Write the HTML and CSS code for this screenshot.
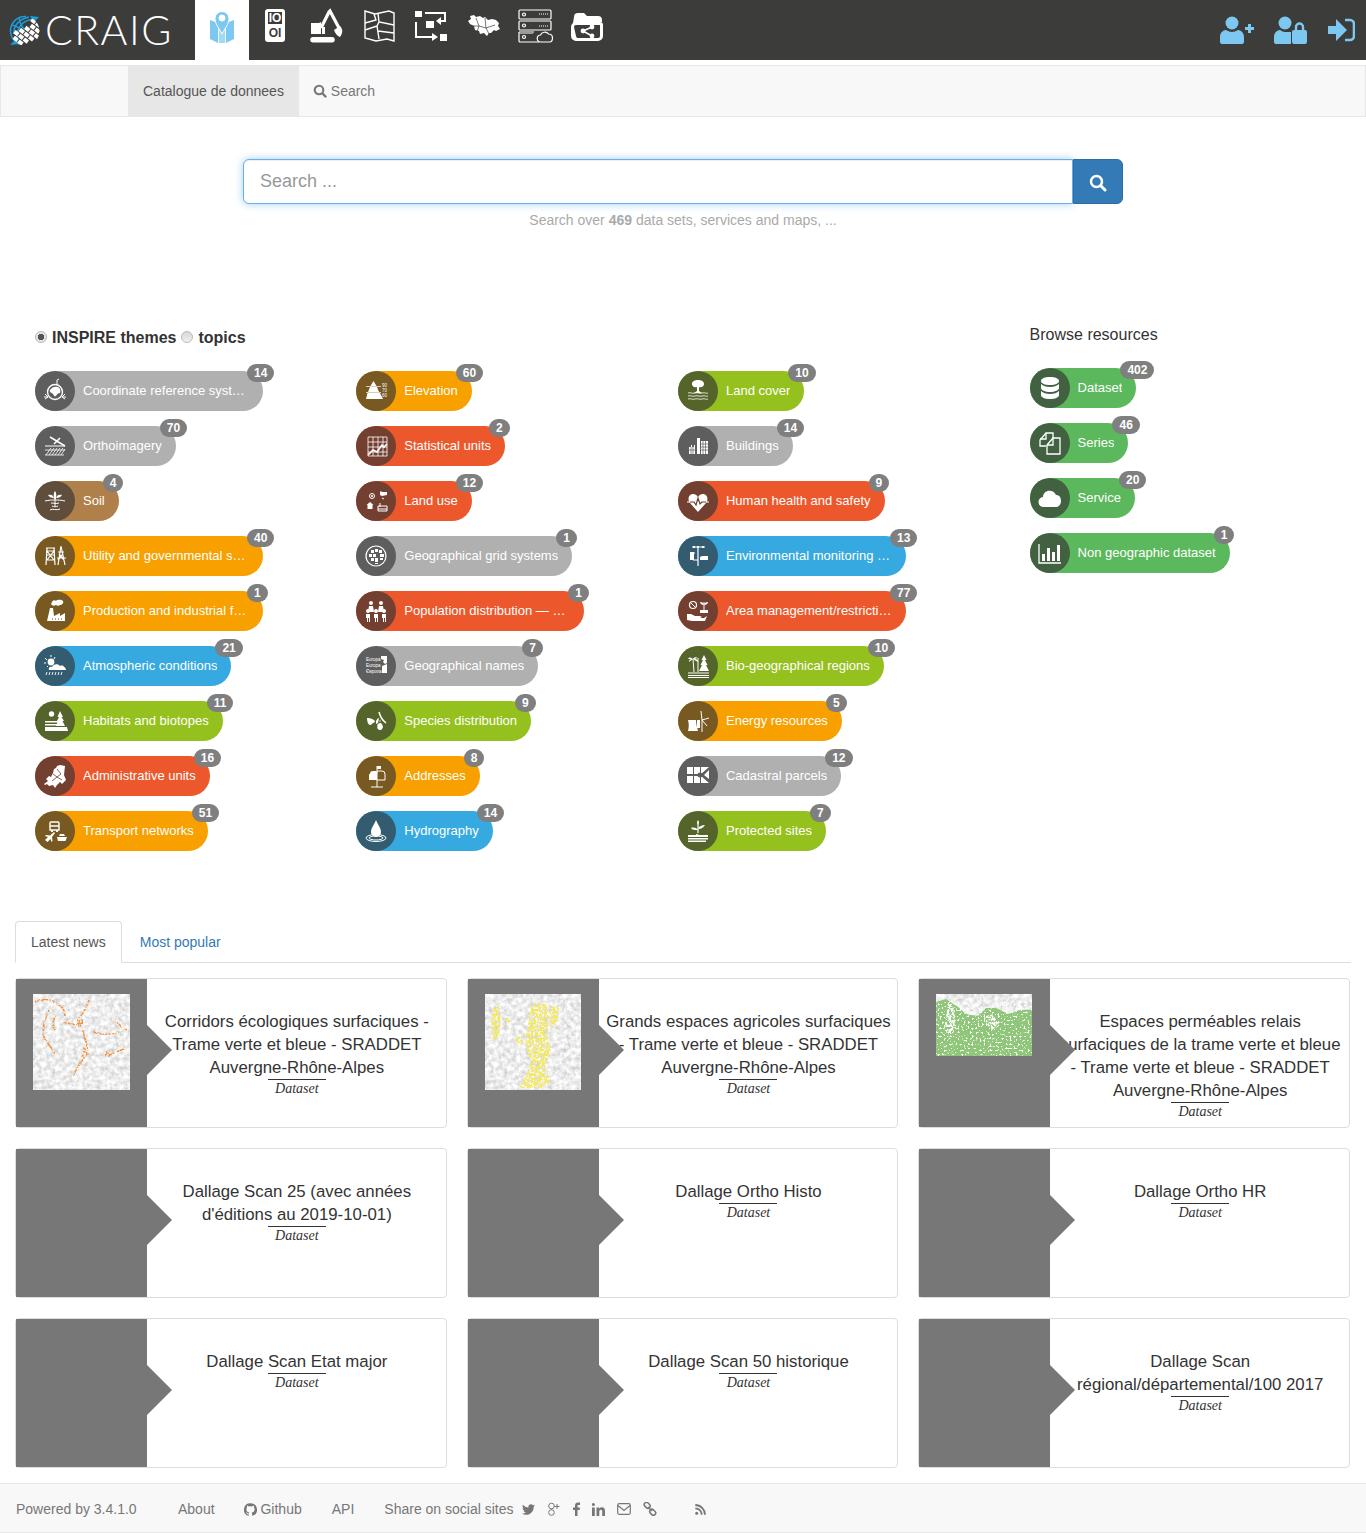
FILE: index.html
```html
<!DOCTYPE html>
<html>
<head>
    <title>CRAIG - Catalogue de donnees</title>
    <link rel="stylesheet" href="styles.css">
</head>
<body>
    <svg class="icon-defs" width="0" height="0">
        <defs>
            <filter id="terrain" x="0" y="0" width="100%" height="100%">
                <feTurbulence type="fractalNoise" baseFrequency=".22" numOctaves="4" seed="8"/>
                <feColorMatrix type="matrix" values=".7 0 0 0 .5  .7 0 0 0 .5  .7 0 0 0 .5  0 0 0 0 1"/>
            </filter>
            <filter id="speck" x="0" y="0" width="100%" height="100%">
                <feTurbulence type="fractalNoise" baseFrequency=".45" numOctaves="2" seed="3" result="noise"/>
                <feColorMatrix in="noise" type="matrix" values="0 0 0 0 0  0 0 0 0 0  0 0 0 0 0  7 0 0 0 -2.9" result="mask"/>
                <feComposite in="SourceGraphic" in2="mask" operator="in"/>
            </filter>
            <filter id="sparse" x="0" y="0" width="100%" height="100%">
                <feTurbulence type="fractalNoise" baseFrequency=".5" numOctaves="2" seed="11" result="noise"/>
                <feColorMatrix in="noise" type="matrix" values="0 0 0 0 0  0 0 0 0 0  0 0 0 0 0  9 0 0 0 -5.2" result="mask"/>
                <feComposite in="SourceGraphic" in2="mask" operator="in"/>
            </filter>
            <clipPath id="globe-clip"><circle cx="16" cy="16" r="14.500"/></clipPath>

            <!-- theme icons, 40x40 so they fill the chip circle -->
            <symbol id="t-crs" viewBox="0 0 40 40">
                <g fill="none" stroke="#fff"><circle cx="20" cy="21" r="7.500" stroke-width="1.400"/><path d="M22 13V9l2-1M10 23l3 3-3 2M30 23l-3 3 3 2M9 26h4M27 26h4"/></g>
                <path fill="#fff" d="M15 19c2-3 5-4 8-3 2 1 3 3 2 6-2 0-3 1-4 3-2 1-2-1-3-2s-4-2-3-4z"/>
            </symbol>
            <symbol id="t-ortho" viewBox="0 0 40 40">
                <g fill="none" stroke="#fff"><path stroke-width="1.500" d="M15 11l15 9M25 12l-6 6"/><path d="M10 20h20"/><path stroke-width=".8" d="M11 29l5-7M14 29l5-7M17 29l5-7M20 29l5-7M23 29l5-7M26 29l4-6M10 24h20M10 29h19"/></g>
            </symbol>
            <symbol id="t-soil" viewBox="0 0 40 40">
                <path fill="#fff" d="M19 18c0-3-1-5 1-8 2 3 1 5 1 8zM19 17c-3 0-5-1-6-3 3-1 5 0 6 3zM21 17c3 0 5-1 6-3-3-1-5 0-6 3z"/>
                <g fill="none" stroke="#fff"><path d="M10 20c4-1 7-1 10-1s6 0 10 1"/><path d="M20 18v7M16 22c3 0 5 1 8 0M17 25c2 1 4 1 6 0M15 29c3-2 6 1 10-1"/></g>
            </symbol>
            <symbol id="t-utility" viewBox="0 0 40 40">
                <g fill="none" stroke="#fff"><path stroke-width="1.200" d="M11 12h9M11 15h9M12 12l-1 17M19 12l1 17M12 19h7M12 24h7M12 15l7 9M19 15l-7 9"/><path stroke-width="1.200" d="M26 10l-3 19M26 10l4 19M23 16h6M22 22h9M24 18l5 6M28 18l-5 6"/></g>
            </symbol>
            <symbol id="t-production" viewBox="0 0 40 40">
                <path fill="#fff" d="M15 17h3l1 8 6-3v3l5-3v8H12zM17 11c1-2 3-2 4-1 2-2 6-1 7 0 1 2-1 4-3 4-1 1-3 1-4 0-2 1-3 1-4 0-1 0-1-2 0-3z"/>
                <path stroke="#5b4a22" d="M17 28h1M20 28h1M23 28h1M26 28h1" fill="none"/>
            </symbol>
            <symbol id="t-atmos" viewBox="0 0 40 40">
                <circle cx="16" cy="16" r="3.400" fill="#fff"/>
                <g fill="none" stroke="#fff"><path d="M16 9v2M10 12l2 2M9 17h2M12 21l1-1M20 11l-1 2"/><path stroke-width=".9" d="M12 26l-1 3M15 26l-1 3M18 26l-1 3M21 26l-1 3M24 26l-1 3M27 26l-1 3"/></g>
                <path fill="#fff" d="M14 24c-1-2 1-4 3-3 1-3 6-4 8-1 2-1 4 0 4 1 1 0 2 2 2 3z"/>
            </symbol>
            <symbol id="t-habitats" viewBox="0 0 40 40">
                <circle cx="16.500" cy="13" r="2.700" fill="#fff"/>
                <path fill="#fff" d="M25 10l3 6h-1.500l2.500 4h-1.500l2.500 5h-9l2-5H22l2-4h-1.500zM10 20h13v1.500H10zM10 23h14v1.500H10zM10 26h22l1 4H10z"/>
            </symbol>
            <symbol id="t-admin" viewBox="0 0 40 40">
                <path fill="#fff" d="M25 9l5 1-1 9 2 5-4 4-2-2-3 3-2 3-2-3-4 1-2-2-2 1-1-1 4-3-2-2 3-3 2 1 2-4 1-4 2-1 1-2z"/>
                <path fill="none" stroke="#6d4034" stroke-width=".8" d="M22 13l4 5-4 3 5 3M18 18l4 3-5 4"/>
            </symbol>
            <symbol id="t-transport" viewBox="0 0 40 40">
                <path fill="none" stroke="#fff" stroke-width="1.400" d="M16 11h7a1 1 0 011 1v7h-9v-7a1 1 0 011-1zM15 15h9"/>
                <path fill="#fff" d="M16 19h2v2h-2zM21 19h2v2h-2zM10 29l3-3-3-1 1-1 4 .5 4-3.500 1 1-3 4 .5 4-1 1-1-3-3 3zM22 26h10l-1.500 4H23zM25 23h4l1 2h-6z"/>
            </symbol>
            <symbol id="t-elevation" viewBox="0 0 40 40">
                <path fill="#fff" d="M17.500 10l3 5h-6zM14 16h7l2 5H12zM11.500 22H24l3 6H10z"/>
                <path fill="none" stroke="#fff" stroke-width=".7" d="M10 15.500h15M10 21.500h15"/>
                <text class="tiny" x="26" y="16">90</text><text class="tiny" x="26" y="21">70</text><text class="tiny" x="26" y="26">60</text>
            </symbol>
            <symbol id="t-stats" viewBox="0 0 40 40">
                <g fill="none" stroke="#fff"><path stroke-width=".8" d="M12 11v19M17 11v19M22 11v19M27 11v19M31 11v19M12 11h19M12 16h19M12 21h19M12 26h19M12 30h19"/><path stroke-width="1.600" d="M12 29l5-5 4 2 5-7 2 2 3-3"/></g>
            </symbol>
            <symbol id="t-landuse" viewBox="0 0 40 40">
                <g fill="none" stroke="#fff"><circle cx="16" cy="15" r="2.500"/><path d="M25 10v3M26 17l2 1"/><path d="M24 26v-4M22 30v-5h9v5zM22 28h9"/></g>
                <circle cx="16" cy="15" r="1" fill="#fff"/>
                <path fill="#fff" d="M24 11h7v3l-5 1-2-1zM14 21l3.500 3h-1V28h-5v-4h-1z"/>
            </symbol>
            <symbol id="t-grid" viewBox="0 0 40 40">
                <circle cx="20" cy="20" r="10" fill="none" stroke="#fff" stroke-width="1.200"/>
                <path fill="#fff" d="M15 14h3v3h-3zM19 13h3v3h-3zM23 14h3v3h-3zM13 18h3v3h-3zM17 18h3v3h-3zM24 18h4v3h-4zM15 22h3v3h-3zM19 22h3v4h-3zM24 22h3v2h-3zM19 27h3v1h-3z"/>
            </symbol>
            <symbol id="t-population" viewBox="0 0 40 40">
                <path fill="#fff" d="M15 10a2 2 0 110 4 2 2 0 010-4zM25 10a2 2 0 110 4 2 2 0 010-4zM13 15h4l1 6h-6zM23 15h4l1 6h-6z"/>
                <path fill="#fff" d="M12 18a2 2 0 110 4 2 2 0 010-4zM20 18a2 2 0 110 4 2 2 0 010-4zM28 18a2 2 0 110 4 2 2 0 010-4zM10 23h4v8h-1v-4h-1v4h-1v-4h-1zM18 23h4v8h-1v-4h-1v4h-1v-4h-1zM26 23h4v8h-1v-4h-1v4h-1v-4h-1z"/>
            </symbol>
            <symbol id="t-names" viewBox="0 0 40 40">
                <text class="tiny" x="10" y="15">Europa</text><text class="tiny" x="10" y="21">Europa</text><text class="tiny" x="10" y="27">Європа</text>
                <path fill="#fff" d="M25 10h6v7l-2 1-2-2 1-2-3-1zM26 20l5-2v9h-5z"/>
            </symbol>
            <symbol id="t-species" viewBox="0 0 40 40">
                <path fill="#fff" d="M19 20c-3-3-6-3-8-3 0 3 1 7 3 7 1 0 2-1 3-2 1 0 2-1 2-2zM20 20c1-2 2-3 3-3l-1 5-2 1z"/>
                <path fill="none" stroke="#fff" stroke-width="1.500" d="M23 11c1 4 3 8 7 11"/>
                <path fill="#fff" d="M24 22a2.600 3.500 0 110 7 2.600 3.500 0 010-7z"/>
                <path fill="none" stroke="#fff" stroke-width=".7" d="M21 24l6 2M21 27l6-1M24 21v-2"/>
            </symbol>
            <symbol id="t-addresses" viewBox="0 0 40 40">
                <g fill="none" stroke="#fff"><path d="M21 15h5a3 3 0 013 3v6h-8zM21 24v7M15 31h12M21 15v-5"/></g>
                <path fill="#fff" d="M14 18a3 3 0 013-3h3a2 2 0 011 3v6h-8v-6zM21 10h4v3h-4z"/>
            </symbol>
            <symbol id="t-hydro" viewBox="0 0 40 40">
                <path fill="#fff" d="M20 9c2 5 5 8 5 12a5 5 0 01-10 0c0-4 3-7 5-12z"/>
                <g fill="none" stroke="#fff"><ellipse cx="20" cy="27" rx="10" ry="3.500"/><ellipse cx="20" cy="27" rx="7" ry="2"/></g>
            </symbol>
            <symbol id="t-landcover" viewBox="0 0 40 40">
                <path fill="#fff" d="M19 20v-4c-3 1-5-1-5-3 0-3 3-4 6-4s6 1 6 4c0 2-2 4-5 3v4l3 2h-8z"/>
                <path fill="none" stroke="#fff" stroke-width=".8" d="M10 22c3-1 4 1 7 0s4 1 7 0 4 1 6 0M10 25c3-1 4 1 7 0s4 1 7 0 4 1 6 0M10 28c3-1 4 1 7 0s4 1 7 0 4 1 6 0"/>
            </symbol>
            <symbol id="t-buildings" viewBox="0 0 40 40">
                <path fill="#fff" d="M11 21h2v-2h1v2h2v-2h1v9h-6zM19 12h3v16h-3zM23 15h7v13h-7z"/>
                <path fill="none" stroke="#5c5c5c" stroke-width=".7" d="M25 15v13M27.500 15v13M23 18h7M23 21h7M23 24h7M13 21v7M15 21v7M11 24h6"/>
            </symbol>
            <symbol id="t-health" viewBox="0 0 40 40">
                <path fill="#fff" d="M20 31L12 22c-3-4-1-9 3-9 2 0 4 1 5 3 1-2 3-3 5-3 4 0 6 5 3 9z"/>
                <path fill="none" stroke="#fff" d="M9 21h5M26 21h5"/>
                <path fill="none" stroke="#6d4034" stroke-width="1.200" d="M12 21h4l2 3 2-7 2 6 2-2h4"/>
            </symbol>
            <symbol id="t-monitoring" viewBox="0 0 40 40">
                <g fill="none" stroke="#fff"><path stroke-width="1.200" d="M14 11h13M20 11v19M15 24h5M12 17h5"/></g>
                <path fill="#fff" d="M12 16h4v8h-4zM22 21l2-1h6v4h-8zM15 10h2v2h-2zM19 10h2v2h-2zM24 10h2v2h-2z"/>
            </symbol>
            <symbol id="t-area" viewBox="0 0 40 40">
                <circle cx="15" cy="14" r="3.500" fill="none" stroke="#fff" stroke-width="1.200"/>
                <path fill="none" stroke="#fff" d="M12.500 11.500l5 5M26 11v9"/>
                <path fill="#fff" d="M26 14c-2 0-4-1-4-3 2 0 4 1 4 3zM26 14c2 0 4-1 4-3-2 0-4 1-4 3zM22 19h8v3h-8zM9 23h4l4 2h5l2 1-2 1h-3l7 0 3-2-2 5H14l-5-1z"/>
            </symbol>
            <symbol id="t-biogeo" viewBox="0 0 40 40">
                <path fill="none" stroke="#fff" d="M15 13l1 13M10 27h21M10 29.500h21M10 31.500h21M20 12v14"/>
                <path fill="#fff" d="M15 13c-2-2-4-2-5 0 1 0 2 0 3 0-2 1-2 2-2 3 1-1 3-2 4-3zM15 13c1-2 3-2 5-1-1 0-2 0-3 1 2 0 3 1 3 3-2-1-4-2-5-3zM26 9l2.500 5h-1.500l2.500 5H28l3 6H21l3-6h-1.500l2.500-5h-1.500z"/>
            </symbol>
            <symbol id="t-energy" viewBox="0 0 40 40">
                <path fill="#fff" d="M10 19h8c0 4 1 7 2 11H10c1-4 1-7 0-11zM19 19h3v8h-3z"/>
                <path fill="none" stroke="#fff" d="M24 19v12M24 19l-1-9M24 19l7-2M24 19l5 6"/>
            </symbol>
            <symbol id="t-cadastral" viewBox="0 0 40 40">
                <path fill="#fff" d="M9 11h6v7H9zM16 11h6v7h-6zM23 11h8l-8 7zM9 20h6v7H9zM16 20h6v7h-6zM23 20l8 7h-8zM26 19l5-5v9z"/>
                <circle cx="22" cy="19" r="2.500" fill="#5c5c5c"/>
            </symbol>
            <symbol id="t-protected" viewBox="0 0 40 40">
                <path fill="none" stroke="#fff" stroke-width="1.200" d="M20 10v12"/>
                <path fill="#fff" d="M20 14c-1-2-1-3 0-5 1 2 1 3 0 5zM20 19c-3 0-6 0-7-2 3-1 6 0 7 2zM20 18c3 0 5-1 7-4-3 0-6 1-7 4zM10 24h8v-1l4 1 8 0v2H10zM10 27h20v1.500H10zM10 29.500h18V31H10z"/>
            </symbol>

            <!-- resource type icons -->
            <symbol id="r-dataset" viewBox="0 0 40 40">
                <path fill="#fff" d="M11 13c0-2.500 4-4 9-4s9 1.500 9 4-4 4-9 4-9-1.500-9-4zM11 16c2 2 5 3 9 3s7-1 9-3v4c0 2-4 4-9 4s-9-2-9-4zM11 23c2 2 5 3 9 3s7-1 9-3v4c0 2.500-4 4-9 4s-9-1.500-9-4z"/>
            </symbol>
            <symbol id="r-series" viewBox="0 0 40 40">
                <g fill="none" stroke="#fff" stroke-width="1.300"><path d="M16 23h-6v-6l6-7h7v5"/><path d="M16 10v6h-6"/><path d="M17 22l6-7h7v16H17z"/><path d="M23 15v7h-6"/></g>
            </symbol>
            <symbol id="r-service" viewBox="0 0 40 40">
                <path fill="#fff" d="M14 29a5 5 0 01-1-10c0-4 4-7 8-6 2 0 4 2 5 4 3 0 5 2 5 6s-3 6-5 6z"/>
            </symbol>
            <symbol id="r-nongeo" viewBox="0 0 40 40">
                <path fill="none" stroke="#fff" stroke-width="1.300" d="M9 11v19h22"/>
                <path fill="#fff" d="M12 21h3v7h-3zM17 15h3v13h-3zM22 19h3v9h-3zM27 12h3v16h-3z"/>
            </symbol>
        </defs>
    </svg>

    <header class="topbar">
        <a class="logo">
            <svg class="logo-globe" width="32" height="32" viewBox="0 0 32 32">
                <g fill="none" stroke="#1c9cd8" stroke-width="1.500"><path d="M17 1.500A14.500 14.500 0 001.500 16c0 6 4 11 9 13.500"/><path d="M20 2C11 4 4 10 5 19M25 4C14 5 7 12 8 25M3 10c5 1 9 4 12 7M10 3c1 5 2 8 5 11"/></g>
                <path fill="#1c9cd8" d="M21 1l9 1-5 5zM1 30l6-6 3 5z"/>
                <g clip-path="url(#globe-clip)"><g fill="#fff" transform="rotate(38 16 16)">
                    <rect x="14" y="1" width="5" height="4"/><rect x="20" y="1" width="5" height="4"/>
                    <rect x="17" y="6" width="5" height="4"/><rect x="23" y="6" width="5" height="4"/>
                    <rect x="14" y="11" width="5" height="4"/><rect x="20" y="11" width="5" height="4"/><rect x="26" y="11" width="5" height="4"/>
                    <rect x="11" y="16" width="5" height="4"/><rect x="17" y="16" width="5" height="4"/><rect x="23" y="16" width="5" height="4"/>
                    <rect x="8" y="21" width="5" height="4"/><rect x="14" y="21" width="5" height="4"/><rect x="20" y="21" width="5" height="4"/>
                    <rect x="11" y="26" width="5" height="4"/><rect x="17" y="26" width="5" height="4"/>
                </g></g>
            </svg>
            <span class="logo-text">CRAIG</span>
        </a>
        <nav class="mainnav">
            <a class="mainnav-item active">
                <svg width="40" height="40" viewBox="0 0 40 40">
                    <path fill="#7cc8f0" d="M8 14l8 3v20l-8-4zM24 17l8-3v19l-8 4z"/>
                    <path fill="#a4d9f5" d="M16.800 17l6.400 0V37l-6.400 0z"/>
                    <path fill="#7cc8f0" fill-rule="evenodd" stroke="#fff" d="M20 28c-3-6-7-10-7-15.500a7 7 0 0114 0C27 18 23 22 20 28zM20 9a3 3 0 100 6 3 3 0 000-6z"/>
                </svg>
            </a>
            <a class="mainnav-item">
                <svg width="40" height="40" viewBox="0 0 40 40">
                    <rect x="10" y="3" width="20" height="33" rx="3" fill="#fff"/>
                    <rect x="13" y="6" width="14" height="12" fill="#3c3c3b"/>
                    <text class="bits" x="20" y="16">IO</text><text class="bits" x="20" y="31" fill="#3c3c3b">OI</text>
                </svg>
            </a>
            <a class="mainnav-item">
                <svg width="40" height="40" viewBox="0 0 40 40">
                    <path fill="#fff" d="M4 17h8l2-1v12H4zM6 31h19a2.500 2.500 0 010 5.500H6a2.500 2.500 0 010-5.500z"/>
                    <path fill="none" stroke="#fff" stroke-width="3.200" d="M14 22L22 6l1-1 9 17"/>
                    <path fill="#fff" d="M33 20c3 3 3 7 0 11-3-1-5-4-6-7zM15 21h3v7h-3z"/>
                </svg>
            </a>
            <a class="mainnav-item">
                <svg width="40" height="40" viewBox="0 0 40 40">
                    <g fill="none" stroke="#fff" stroke-width="1.400"><path d="M6 5l10 3 14-3 5 2v28l-7-2-11 2-11-3z"/><path d="M15 8l2 6-11 3M19 7l1 9 15 3M6 24l12-4 2 13M20 16l-2 4M35 27l-16-2"/></g>
                </svg>
            </a>
            <a class="mainnav-item">
                <svg width="40" height="40" viewBox="0 0 40 40">
                    <path fill="#fff" d="M4 5h7v6H4zM15 15h8v7h-8zM29 28h7v7h-7zM25 15l5-4v3h3V8H14V6h21v10h-5v3z"/>
                    <path fill="none" stroke="#fff" stroke-width="2" d="M5 16v15h17"/>
                    <path fill="#fff" d="M21 27l6 4-6 4z"/>
                </svg>
            </a>
            <a class="mainnav-item">
                <svg width="40" height="40" viewBox="0 0 40 40">
                    <path fill="#fff" d="M5 15l3-2-1-3 4-1 2 2 4-1 3 2 2-1 3 3 4-1 4 1 3 3-1 3 2 3-4 2-2-1-3 3-2 0-2 3-3-3-4 1-1-3-4-1-1-4-4-2z"/>
                    <path fill="none" stroke="#3c3c3b" stroke-width=".7" d="M13 12l3 8 7 2 3 6M22 12l1 10 9-3M9 20l7 0M16 20l-2 6"/>
                </svg>
            </a>
            <a class="mainnav-item">
                <svg width="40" height="40" viewBox="0 0 40 40">
                    <g fill="none" stroke="#fff" stroke-width="1.200"><rect x="4" y="4" width="32" height="9" rx="1"/><rect x="4" y="15" width="32" height="9" rx="1"/><path d="M4 26h15M4 26v9a1 1 0 001 1h19"/><path d="M26 36a3.500 3.500 0 01-.5-7c1-3 6-4 8-1 3 0 4 2 4 4s-1 4-3 4z"/><circle cx="9" cy="8.500" r="1.500"/><circle cx="9" cy="19.500" r="1.500"/><circle cx="9" cy="31" r="1.500"/></g>
                    <path fill="none" stroke="#fff" stroke-dasharray="1 1" d="M24 8h9M24 20h9"/>
                    <path fill="none" stroke="#999" stroke-width="2" d="M5 27h13"/>
                </svg>
            </a>
            <a class="mainnav-item">
                <svg width="40" height="40" viewBox="0 0 40 40">
                    <path fill="#fff" fill-rule="evenodd" d="M7 11a4 4 0 014-4h6l3 3h11a4 4 0 014 4v2H12a7 7 0 00-7 7z"/>
                    <path fill="#fff" fill-rule="evenodd" d="M9 16h24a3 3 0 013 3v11a5 5 0 01-5 5H9a5 5 0 01-5-5V21a5 5 0 015-5zM9 19a2 2 0 00-2 2l2 9a2 2 0 002 2h20a2 2 0 002-2V19z"/>
                    <g fill="#fff"><circle cx="16" cy="25" r="2.400"/><circle cx="25" cy="21" r="2.400"/><circle cx="25" cy="30" r="2.400"/></g>
                    <path fill="none" stroke="#fff" stroke-width="1.500" d="M16 25l9-4M16 25l9 5"/>
                </svg>
            </a>
        </nav>
        <div class="usernav">
            <a>
                <svg width="35" height="28" viewBox="0 0 35 28">
                    <circle cx="13" cy="7" r="6.500" fill="#7cc8f0"/>
                    <path fill="#7cc8f0" d="M1 26v-5c0-4 3-7 6-7 2 1 4 2 6 2s4-1 6-2c3 0 6 3 6 7v5a2 2 0 01-2 2H3a2 2 0 01-2-2z"/>
                    <path fill="#7cc8f0" d="M26 11h3V8h3v3h3v3h-3v3h-3v-3h-3z"/>
                </svg>
            </a>
            <a>
                <svg width="33" height="28" viewBox="0 0 33 28">
                    <circle cx="11" cy="7" r="6.500" fill="#7cc8f0"/>
                    <path fill="#7cc8f0" d="M0 26v-5c0-4 3-7 6-7 2 1 3 2 5 2h6v12H2a2 2 0 01-2-2z"/>
                    <path fill="none" stroke="#7cc8f0" stroke-width="2.400" d="M22 15v-4a3.500 3.500 0 017 0v4"/>
                    <rect x="18" y="14" width="15" height="14" rx="2" fill="#7cc8f0"/>
                </svg>
            </a>
            <a>
                <svg width="28" height="24" viewBox="0 0 28 24">
                    <path fill="#7cc8f0" d="M1 8h8V1l11 11-11 11v-7H1z"/>
                    <path fill="none" stroke="#7cc8f0" stroke-width="2.600" d="M18 2h5a4 4 0 014 4v12a4 4 0 01-4 4h-5"/>
                </svg>
            </a>
        </div>
    </header>

    <div class="subnav">
        <a class="subnav-item active">Catalogue de donnees</a>
        <a class="subnav-item">
            <svg class="search-mini" width="14" height="14" viewBox="0 0 14 14"><circle cx="6" cy="6" r="4.300" fill="none" stroke="#777" stroke-width="2.100"/><path stroke="#777" stroke-width="2.400" stroke-linecap="round" d="M9.500 9.500l3 3"/></svg>
            Search
        </a>
    </div>

    <form class="searchbox">
        <input class="searchbox-input" type="text" placeholder="Search ...">
        <button class="searchbox-btn" type="button">
            <svg width="18" height="18" viewBox="0 0 18 18"><circle cx="7.500" cy="7.500" r="5.500" fill="none" stroke="#fff" stroke-width="2.500"/><path stroke="#fff" stroke-width="3" stroke-linecap="round" d="M12 12l4 4"/></svg>
        </button>
    </form>
    <p class="search-hint">Search over <b>469</b> data sets, services and maps, ...</p>

    <section class="browse">
        <div class="themes">
            <div class="theme-switch">
                <span class="radio checked"></span><b>INSPIRE themes</b>
                <span class="radio"></span><b>topics</b>
            </div>
            <div class="theme-grid">
                <a class="chip grey"><span class="chip-icon"><svg><use href="#t-crs"/></svg></span><span class="chip-label">Coordinate reference systems</span><span class="chip-badge">14</span></a>
                <a class="chip orange"><span class="chip-icon"><svg><use href="#t-elevation"/></svg></span><span class="chip-label">Elevation</span><span class="chip-badge">60</span></a>
                <a class="chip lime"><span class="chip-icon"><svg><use href="#t-landcover"/></svg></span><span class="chip-label">Land cover</span><span class="chip-badge">10</span></a>

                <a class="chip grey"><span class="chip-icon"><svg><use href="#t-ortho"/></svg></span><span class="chip-label">Orthoimagery</span><span class="chip-badge">70</span></a>
                <a class="chip red"><span class="chip-icon"><svg><use href="#t-stats"/></svg></span><span class="chip-label">Statistical units</span><span class="chip-badge">2</span></a>
                <a class="chip grey"><span class="chip-icon"><svg><use href="#t-buildings"/></svg></span><span class="chip-label">Buildings</span><span class="chip-badge">14</span></a>

                <a class="chip brown"><span class="chip-icon"><svg><use href="#t-soil"/></svg></span><span class="chip-label">Soil</span><span class="chip-badge">4</span></a>
                <a class="chip red"><span class="chip-icon"><svg><use href="#t-landuse"/></svg></span><span class="chip-label">Land use</span><span class="chip-badge">12</span></a>
                <a class="chip red"><span class="chip-icon"><svg><use href="#t-health"/></svg></span><span class="chip-label">Human health and safety</span><span class="chip-badge">9</span></a>

                <a class="chip orange"><span class="chip-icon"><svg><use href="#t-utility"/></svg></span><span class="chip-label">Utility and governmental services</span><span class="chip-badge">40</span></a>
                <a class="chip grey"><span class="chip-icon"><svg><use href="#t-grid"/></svg></span><span class="chip-label">Geographical grid systems</span><span class="chip-badge">1</span></a>
                <a class="chip blue"><span class="chip-icon"><svg><use href="#t-monitoring"/></svg></span><span class="chip-label">Environmental monitoring facilities</span><span class="chip-badge">13</span></a>

                <a class="chip orange"><span class="chip-icon"><svg><use href="#t-production"/></svg></span><span class="chip-label">Production and industrial facilities</span><span class="chip-badge">1</span></a>
                <a class="chip red"><span class="chip-icon"><svg><use href="#t-population"/></svg></span><span class="chip-label">Population distribution — demography</span><span class="chip-badge">1</span></a>
                <a class="chip red"><span class="chip-icon"><svg><use href="#t-area"/></svg></span><span class="chip-label">Area management/restriction/regulation zones</span><span class="chip-badge">77</span></a>

                <a class="chip blue"><span class="chip-icon"><svg><use href="#t-atmos"/></svg></span><span class="chip-label">Atmospheric conditions</span><span class="chip-badge">21</span></a>
                <a class="chip grey"><span class="chip-icon"><svg><use href="#t-names"/></svg></span><span class="chip-label">Geographical names</span><span class="chip-badge">7</span></a>
                <a class="chip lime"><span class="chip-icon"><svg><use href="#t-biogeo"/></svg></span><span class="chip-label">Bio-geographical regions</span><span class="chip-badge">10</span></a>

                <a class="chip lime"><span class="chip-icon"><svg><use href="#t-habitats"/></svg></span><span class="chip-label">Habitats and biotopes</span><span class="chip-badge">11</span></a>
                <a class="chip lime"><span class="chip-icon"><svg><use href="#t-species"/></svg></span><span class="chip-label">Species distribution</span><span class="chip-badge">9</span></a>
                <a class="chip orange"><span class="chip-icon"><svg><use href="#t-energy"/></svg></span><span class="chip-label">Energy resources</span><span class="chip-badge">5</span></a>

                <a class="chip red"><span class="chip-icon"><svg><use href="#t-admin"/></svg></span><span class="chip-label">Administrative units</span><span class="chip-badge">16</span></a>
                <a class="chip orange"><span class="chip-icon"><svg><use href="#t-addresses"/></svg></span><span class="chip-label">Addresses</span><span class="chip-badge">8</span></a>
                <a class="chip grey"><span class="chip-icon"><svg><use href="#t-cadastral"/></svg></span><span class="chip-label">Cadastral parcels</span><span class="chip-badge">12</span></a>

                <a class="chip orange"><span class="chip-icon"><svg><use href="#t-transport"/></svg></span><span class="chip-label">Transport networks</span><span class="chip-badge">51</span></a>
                <a class="chip blue"><span class="chip-icon"><svg><use href="#t-hydro"/></svg></span><span class="chip-label">Hydrography</span><span class="chip-badge">14</span></a>
                <a class="chip lime"><span class="chip-icon"><svg><use href="#t-protected"/></svg></span><span class="chip-label">Protected sites</span><span class="chip-badge">7</span></a>
            </div>
        </div>
        <div class="resources">
            <h2 class="resources-title">Browse resources</h2>
            <a class="chip green"><span class="chip-icon"><svg><use href="#r-dataset"/></svg></span><span class="chip-label">Dataset</span><span class="chip-badge">402</span></a>
            <a class="chip green"><span class="chip-icon"><svg><use href="#r-series"/></svg></span><span class="chip-label">Series</span><span class="chip-badge">46</span></a>
            <a class="chip green"><span class="chip-icon"><svg><use href="#r-service"/></svg></span><span class="chip-label">Service</span><span class="chip-badge">20</span></a>
            <a class="chip green"><span class="chip-icon"><svg><use href="#r-nongeo"/></svg></span><span class="chip-label">Non geographic dataset</span><span class="chip-badge">1</span></a>
        </div>
    </section>

    <ul class="tabs">
        <li class="tab active">Latest news</li>
        <li class="tab">Most popular</li>
    </ul>

    <section class="cards">
        <article class="card">
            <div class="card-media">
                <svg class="thumb" width="97" height="96" viewBox="0 0 97 96">
                    <rect width="97" height="96" filter="url(#terrain)"/>
                    <g fill="none" stroke="#f7923a" stroke-width="1.700" filter="url(#speck)">
                        <path d="M2 8c8-4 16-3 22 2 5 2 8 6 8 12M16 16c-4 8-6 16-6 24 2 8 8 12 12 20M22 22c-2 6-3 10 0 14M30 28c6 2 12 2 18 4M46 24c4-4 8-12 10-18M50 36c0 8 6 14 4 22-3 8-10 14-14 24M60 38c8 2 16 4 26 0M80 24c4 4 8 10 14 12M74 62c6-2 12-6 20-8M48 62l8-2"/>
                        <path stroke-width="5" d="M44 28h6M50 56h3M72 60h5"/>
                    </g>
                </svg>
            </div>
            <div class="card-body">
                <h3 class="card-title">Corridors écologiques surfaciques - Trame verte et bleue - SRADDET Auvergne-Rhône-Alpes</h3>
                <span class="card-type">Dataset</span>
            </div>
        </article>
        <article class="card">
            <div class="card-media">
                <svg class="thumb" width="96" height="96" viewBox="0 0 96 96">
                    <rect width="96" height="96" filter="url(#terrain)"/>
                    <g fill="#f4e85c" filter="url(#speck)">
                        <path d="M8 14l6-2 2 14-2 16-6 4-2-16zM46 10l14-2 4 12-2 22 4 16-6 16 6 14-10 6H34l8-14 4-12-6-18zM66 12l8 2-2 16-6 4-2-14z"/>
                        <path d="M20 24l6 0-2 8zM30 44l8-2 0 6-6 4z"/>
                    </g>
                </svg>
            </div>
            <div class="card-body">
                <h3 class="card-title">Grands espaces agricoles surfaciques - Trame verte et bleue - SRADDET Auvergne-Rhône-Alpes</h3>
                <span class="card-type">Dataset</span>
            </div>
        </article>
        <article class="card">
            <div class="card-media">
                <svg class="thumb" width="96" height="62" viewBox="0 0 96 62">
                    <rect width="96" height="62" filter="url(#terrain)"/>
                    <path fill="#8fc67a" d="M0 8l10-3 12 8 8 7 12 2 8-8 10 0 12 6 12-4 12 0V62H0z"/>
                    <rect y="8" width="96" height="54" fill="#fff" filter="url(#sparse)"/>
                    <g fill="#fff" filter="url(#speck)"><path d="M12 10l5 0 3 24-6 10-5-14zM50 22l8-2 4 10-6 6-6-6z"/></g>
                </svg>
            </div>
            <div class="card-body">
                <h3 class="card-title">Espaces perméables relais surfaciques de la trame verte et bleue - Trame verte et bleue - SRADDET Auvergne-Rhône-Alpes</h3>
                <span class="card-type">Dataset</span>
            </div>
        </article>
        <article class="card">
            <div class="card-media"></div>
            <div class="card-body">
                <h3 class="card-title">Dallage Scan 25 (avec années d'éditions au 2019-10-01)</h3>
                <span class="card-type">Dataset</span>
            </div>
        </article>
        <article class="card">
            <div class="card-media"></div>
            <div class="card-body">
                <h3 class="card-title">Dallage Ortho Histo</h3>
                <span class="card-type">Dataset</span>
            </div>
        </article>
        <article class="card">
            <div class="card-media"></div>
            <div class="card-body">
                <h3 class="card-title">Dallage Ortho HR</h3>
                <span class="card-type">Dataset</span>
            </div>
        </article>
        <article class="card">
            <div class="card-media"></div>
            <div class="card-body">
                <h3 class="card-title">Dallage Scan Etat major</h3>
                <span class="card-type">Dataset</span>
            </div>
        </article>
        <article class="card">
            <div class="card-media"></div>
            <div class="card-body">
                <h3 class="card-title">Dallage Scan 50 historique</h3>
                <span class="card-type">Dataset</span>
            </div>
        </article>
        <article class="card">
            <div class="card-media"></div>
            <div class="card-body">
                <h3 class="card-title">Dallage Scan régional/départemental/100 2017</h3>
                <span class="card-type">Dataset</span>
            </div>
        </article>
    </section>

    <footer class="footer">
        <span class="powered">Powered by 3.4.1.0</span>
        <a class="footer-link">About</a>
        <a class="footer-link">
            <svg width="13" height="13" viewBox="0 0 24 24"><path fill="#777" d="M12 .3a12 12 0 00-3.800 23.400c.6.1.8-.3.8-.6v-2c-3.300.7-4-1.600-4-1.600-.6-1.400-1.400-1.800-1.400-1.800-1-.7.1-.7.1-.7 1.200.1 1.900 1.200 1.900 1.200 1 1.800 2.800 1.300 3.500 1 .1-.8.4-1.300.8-1.600-2.700-.3-5.500-1.300-5.500-6 0-1.200.5-2.300 1.200-3.100-.1-.4-.5-1.600.1-3.200 0 0 1-.3 3.300 1.200a11.500 11.500 0 016 0c2.300-1.500 3.300-1.200 3.300-1.200.6 1.600.2 2.800.1 3.200.8.8 1.200 1.900 1.200 3.100 0 4.700-2.800 5.700-5.500 6 .5.4.9 1.100.9 2.200v3.300c0 .3.2.7.8.6A12 12 0 0012 .3z"/></svg>
            Github
        </a>
        <a class="footer-link">API</a>
        <span class="footer-share">Share on social sites</span>
        <span class="share-icons">
            <svg width="13" height="13" viewBox="0 0 24 24"><path fill="#777" d="M23.950 4.570a10 10 0 01-2.820.780 4.960 4.960 0 002.160-2.720c-.95.550-2 .96-3.130 1.180a4.920 4.920 0 00-8.380 4.480C7.690 8.100 4.070 6.130 1.640 3.160a4.820 4.820 0 00-.67 2.480c0 1.710.87 3.210 2.190 4.100a4.900 4.900 0 01-2.230-.62v.06a4.920 4.920 0 003.950 4.830 5 5 0 01-2.210.08 4.940 4.940 0 004.600 3.420 9.870 9.870 0 01-6.100 2.100c-.39 0-.78-.02-1.170-.06a14 14 0 007.560 2.210c9.050 0 14-7.500 14-13.990 0-.21 0-.42-.02-.63A9.940 9.940 0 0024 4.590z"/></svg>
            <svg width="14" height="14" viewBox="0 0 14 14"><g fill="none" stroke="#777"><circle cx="4.500" cy="4" r="2.800"/><circle cx="4.500" cy="10.500" r="2.800"/><path d="M4.500 6.800v1M10 2v5M7.500 4.500h5"/></g></svg>
            <svg width="7" height="14" viewBox="0 0 7 14"><path fill="#777" d="M2 14V8H0V5.500h2V3.500C2 1.500 3.200.500 5 .500h2V3H5.500c-.8 0-1 .4-1 1v1.500H7L6.600 8H4.500v6z"/></svg>
            <svg width="13" height="13" viewBox="0 0 13 13"><path fill="#777" d="M0 4.500h2.800V13H0zM1.400 0a1.500 1.500 0 110 3 1.500 1.500 0 010-3zM4.500 4.500h2.700v1.200c.5-.8 1.400-1.400 2.600-1.400C12.200 4.300 13 5.800 13 8v5h-2.800V8.600c0-1-.3-1.900-1.300-1.900s-1.600.8-1.600 2V13H4.500z"/></svg>
            <svg width="14" height="12" viewBox="0 0 14 12"><rect x=".7" y=".7" width="12.600" height="10.600" rx="1.500" fill="none" stroke="#777" stroke-width="1.200"/><path fill="none" stroke="#777" stroke-width="1.200" d="M1 2.500l6 5 6-5"/></svg>
            <svg width="14" height="14" viewBox="0 0 14 14"><g fill="none" stroke="#777" stroke-width="1.500"><rect x="1" y="1" width="6.500" height="4.500" rx="2.200" transform="rotate(45 4.200 3.200)"/><rect x="6.500" y="8" width="6.500" height="4.500" rx="2.200" transform="rotate(45 9.700 10.200)"/><path d="M5 5l4 4"/></g></svg>
        </span>
        <a class="footer-rss">
            <svg width="11" height="11" viewBox="0 0 11 11"><circle cx="1.700" cy="9.300" r="1.500" fill="#777"/><path fill="none" stroke="#777" stroke-width="1.800" d="M.3 4.300a6.400 6.400 0 016.400 6.400M.3 1a9.700 9.700 0 019.700 9.700"/></svg>
        </a>
    </footer>
</body>
</html>
```

FILE: styles.css
```css
/* page */
body {
    margin: 0;
    background: #fff;
    color: #333;
    font-family: "Liberation Sans", Arial, sans-serif;
    font-size: 14px;
    line-height: 20px;
}

a {
    color: inherit;
    text-decoration: none;
}

.icon-defs {
    display: block;
    height: 0;
}

.tiny {
    fill: #fff;
    font-family: "Liberation Sans", sans-serif;
    font-size: 4.500px;
}

.bits {
    fill: #fff;
    font-family: "Liberation Sans", sans-serif;
    font-size: 12px;
    font-weight: bold;
    text-anchor: middle;
}

.bits[fill] {
    fill: #3c3c3b;
}

/* top bar */
.topbar {
    display: flex;
    height: 60px;
    background: #3c3c3b;
}

.logo {
    display: flex;
    align-items: center;
    width: 195px;
    padding: 0 0 0 9px;
    box-sizing: border-box;
}

.logo-globe {
    flex: none;
    margin-top: 1px;
}

.logo-text {
    margin-left: 4px;
    color: #fff;
    font-family: Lato, "Liberation Sans", sans-serif;
    font-size: 41px;
    font-weight: 300;
    letter-spacing: 1.500px;
    line-height: 60px;
}

.mainnav {
    display: flex;
}

.mainnav-item {
    display: flex;
    justify-content: center;
    width: 52px;
    padding-top: 6px;
    box-sizing: border-box;
}

.mainnav-item.active {
    width: 54px;
    background: #fff;
}

.usernav {
    display: flex;
    align-items: center;
    gap: 20px;
    margin-left: auto;
    padding: 0 11px 0 0;
}

.usernav a {
    display: flex;
    margin-top: -1px;
}

/* second bar */
.subnav {
    display: flex;
    height: 52px;
    margin-top: 5px;
    padding-left: 127px;
    background: #f8f8f8;
    border: 1px solid #e7e7e7;
    box-sizing: border-box;
    color: #777;
}

.subnav-item {
    padding: 15px;
    line-height: 20px;
}

.subnav-item.active {
    background: #e7e7e7;
    color: #555;
}

.search-mini {
    margin-left: -1px;
    vertical-align: -2px;
}

/* search */
.searchbox {
    display: flex;
    width: 880px;
    height: 45px;
    margin: 42px 0 0 243px;
}

.searchbox-input {
    flex: 1;
    min-width: 0;
    padding: 0 16px;
    background: #fff;
    border: 1px solid #66afe9;
    border-radius: 6px 0 0 6px;
    box-shadow: inset 0 1px 1px rgba(0, 0, 0, .075), 0 0 8px rgba(102, 175, 233, .6);
    color: #555;
    font-family: inherit;
    font-size: 18px;
    outline: none;
}

.searchbox-input::placeholder {
    color: #999;
}

.searchbox-btn {
    width: 50px;
    padding: 0;
    background: #337ab7;
    border: 1px solid #2e6da4;
    border-radius: 0 6px 6px 0;
}

.searchbox-btn svg {
    display: block;
    margin: 2px auto 0;
}

.search-hint {
    margin: 6px 0 0;
    color: #aaa;
    text-align: center;
}

/* themes and resources */
.browse {
    display: flex;
    margin-top: 94px;
    padding-left: 35px;
}

.themes {
    width: 994.600px;
}

.theme-switch {
    display: flex;
    align-items: center;
    height: 20px;
    margin-top: 4px;
    font-size: 16px;
}

.radio {
    flex: none;
    width: 12px;
    height: 12px;
    margin-right: 5px;
    background: linear-gradient(#d8d8d8, #f0f0f0);
    border: 1px solid #bbb;
    border-radius: 50%;
    box-sizing: border-box;
    margin-top: -2px;
}

.radio.checked {
    background: radial-gradient(circle, #555 0 3px, #e4e4e4 3.500px);
}

.theme-switch b + .radio {
    margin-left: 5px;
}

.theme-grid {
    display: grid;
    grid-template-columns: 321.300px 321.700px 321.300px;
    row-gap: 15px;
    justify-items: start;
    margin-top: 23px;
}

.chip {
    position: relative;
    display: inline-flex;
    align-items: center;
    height: 40px;
    padding: 0 14px 0 48px;
    border-radius: 20px;
    color: #fff;
    font-size: 13px;
}

.chip-icon {
    position: absolute;
    left: 0;
    top: 0;
    width: 40px;
    height: 40px;
    background: rgba(50, 50, 50, .65);
    border-radius: 50%;
}

.chip-icon svg {
    display: block;
    width: 40px;
    height: 40px;
}

.chip-label {
    max-width: 166px;
    overflow: hidden;
    text-overflow: ellipsis;
    white-space: nowrap;
}

.chip-badge {
    position: absolute;
    left: 100%;
    top: -7px;
    margin-left: -16px;
    padding: 3px 7px;
    background: #7f7f7f;
    border-radius: 10px;
    font-size: 12px;
    font-weight: bold;
    line-height: 12px;
}

.grey { background: #b0b0b0; }
.brown { background: #b0804a; }
.orange { background: #f7a000; }
.red { background: #ec582c; }
.blue { background: #36a9e1; }
.lime { background: #95c11f; }
.green { background: #5cb85c; }

.resources {
    display: flex;
    flex-direction: column;
    align-items: flex-start;
    gap: 15px;
}

.resources-title {
    height: 20px;
    margin: 1px 0 8px;
    font-size: 16px;
    font-weight: normal;
    line-height: 20px;
}

/* tabs */
.tabs {
    display: flex;
    width: 1336px;
    height: 42px;
    margin: 70px 0 0 15px;
    padding: 0;
    border-bottom: 1px solid #ddd;
    box-sizing: border-box;
    list-style: none;
}

.tab {
    height: 42px;
    margin-right: 2px;
    padding: 10px 15px 0;
    border: 1px solid transparent;
    box-sizing: border-box;
    color: #337ab7;
}

.tab.active {
    background: #fff;
    border-color: #ddd #ddd #fff;
    border-radius: 4px 4px 0 0;
    color: #555;
}

/* cards */
.cards {
    display: grid;
    grid-template-columns: repeat(3, 1fr);
    grid-auto-rows: 150px;
    gap: 20px;
    margin: 15px 16px 0 15px;
}

.card {
    display: flex;
    border: 1px solid #ddd;
    border-radius: 4px;
    box-sizing: border-box;
}

.card-media {
    position: relative;
    flex: none;
    width: 131px;
    padding-top: 15px;
    background: #777;
    box-sizing: border-box;
    z-index: 1;
}

/* the arrow lies over the title, long titles run under it */
.card-media::after {
    content: "";
    position: absolute;
    left: 100%;
    top: 50%;
    margin-top: -28px;
    border-left: 25px solid #777;
    border-top: 25px solid transparent;
    border-bottom: 25px solid transparent;
}

.thumb {
    display: block;
    margin-left: 17px;
}

.card-body {
    flex: 1;
    min-width: 0;
    padding: 31px 6px 0 7px;
    text-align: center;
}

.card-title {
    margin: 0;
    font-size: 16.800px;
    font-weight: normal;
    line-height: 23px;
}

.card-title::after {
    content: "";
    display: block;
    width: 58px;
    margin: 0 auto;
    border-bottom: 1px solid #333;
}

.card-type {
    display: block;
    font-family: "Liberation Serif", "Times New Roman", serif;
    font-size: 14px;
    font-style: italic;
    line-height: 18px;
}

/* footer */
.footer {
    display: flex;
    align-items: center;
    height: 50px;
    margin-top: 15px;
    padding: 2px 0 0 16px;
    background: #f8f8f8;
    border-top: 1px solid #e7e7e7;
    border-bottom: 1px solid #e7e7e7;
    box-sizing: border-box;
    color: #777;
}

.powered {
    width: 162px;
}

.footer-link {
    margin-right: 30px;
}

.footer-link svg {
    margin-left: -1px;
    vertical-align: -2px;
}

.share-icons {
    display: flex;
    align-items: center;
    gap: 12px;
    margin-left: 8px;
}

.footer-rss {
    display: flex;
    margin-left: 38px;
}
```
